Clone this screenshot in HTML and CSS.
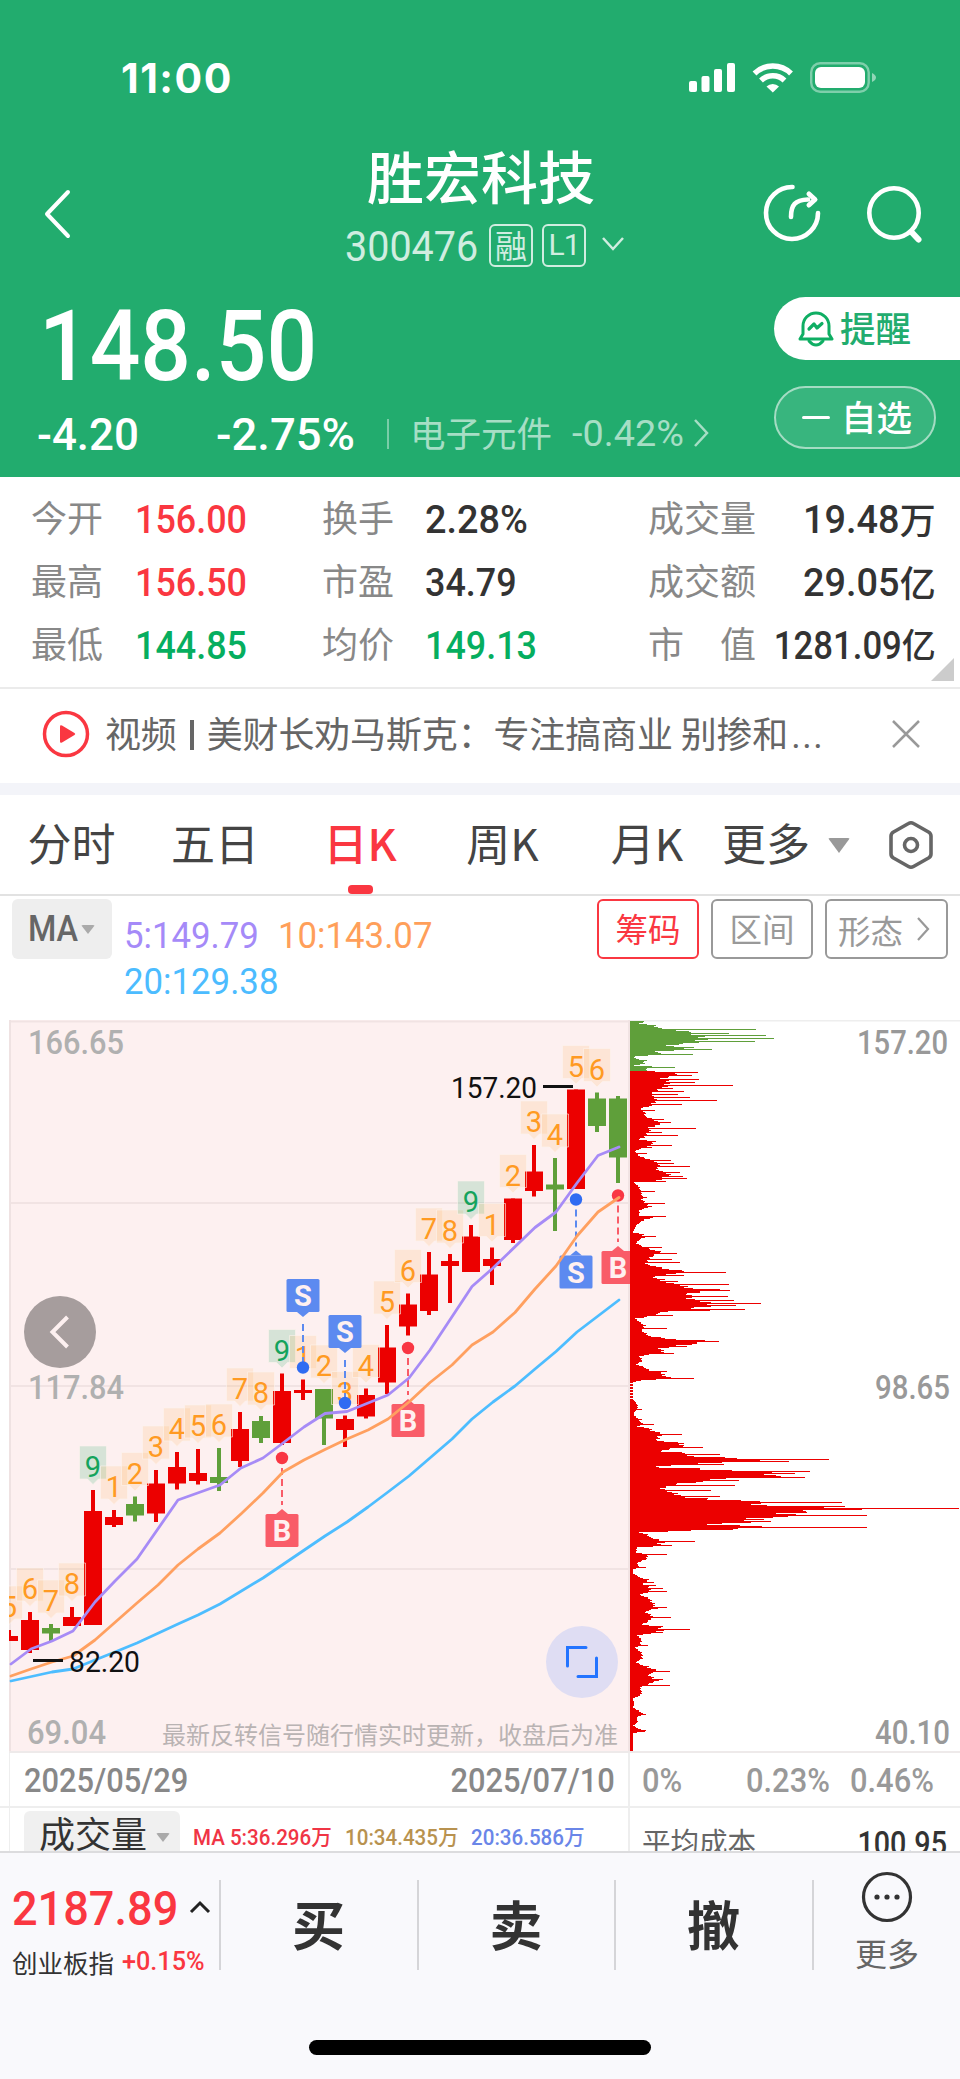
FILE: index.html
```html
<!DOCTYPE html>
<html lang="zh-CN">
<head>
<meta charset="utf-8">
<title>胜宏科技 300476</title>
<link rel="stylesheet" href="styles.css">
</head>
<body>
<div class="app">
  <header class="head">
    <div class="status">
      <span class="clock">11:00</span>
      <svg class="status-icons" width="190" height="34" viewBox="0 0 190 34" fill="#fff">
        <rect x="0" y="20" width="8" height="11" rx="2"/><rect x="12.500" y="15" width="8" height="16" rx="2"/><rect x="25" y="8" width="8" height="23" rx="2"/><rect x="38" y="2" width="8" height="29" rx="2"/>
        <g fill="none" stroke="#fff" stroke-width="5.500"><path d="M65.500 12.500a26 26 0 0 1 36.500 0"/><path d="M72 19.500a17 17 0 0 1 23.500 0"/></g>
        <path d="M77.500 25.500a9 9 0 0 1 12.500 0l-6.200 6z"/>
        <rect x="122.200" y="2.200" width="57.500" height="28.500" rx="9" fill="none" stroke="#fff" stroke-opacity=".42" stroke-width="2.400"/>
        <rect x="126" y="6" width="50" height="21" rx="6"/><path d="M183 12q4 2 4 4.500t-4 4.500z" opacity=".5"/>
      </svg>
    </div>
    <div class="nav">
      <svg class="back" width="30" height="52" viewBox="0 0 30 52"><path d="M26 4L5 26l21 22" fill="none" stroke="#fff" stroke-width="4" stroke-linecap="round" stroke-linejoin="round"/></svg>
      <div class="title">
        <h1>胜宏科技</h1>
        <div class="code"><span class="din code-num">300476</span><span class="badge">融</span><span class="badge latin">L1</span>
          <svg width="24" height="16" viewBox="0 0 24 16"><path d="M2 2l10 11L22 2" fill="none" stroke="#d0ede0" stroke-width="2.500"/></svg></div>
      </div>
      <svg class="nav-icons" width="164" height="64" viewBox="0 0 164 64" fill="none" stroke="#fff" stroke-width="4.600" stroke-linecap="round" stroke-linejoin="round">
        <path d="M32.500 6A26 26 0 1 0 58 32"/><path d="M31 36c0-12 4-17 17-17.500"/><path d="M49 13l6 5.500-6 5.500" stroke-width="5"/>
        <circle cx="134" cy="32" r="24.700"/><path d="M151.500 51l7 7.500" stroke-width="6"/>
      </svg>
    </div>
    <div class="quote">
      <div class="quote-main">
        <div class="price"><span class="din">148.50</span></div>
        <div class="change">
          <span class="din chg">-4.20</span><span class="din pct">-2.75%</span><i class="sep"></i>
          <span class="sector">电子元件</span><span class="din sector-pct">-0.42%</span>
          <svg width="16" height="28" viewBox="0 0 16 28"><path d="M2 1l12 13L2 27" fill="none" stroke="#a6dec5" stroke-width="2.500"/></svg>
        </div>
      </div>
      <div class="pills">
        <div class="pill remind">
          <svg width="36" height="38" viewBox="0 0 36 38" fill="none" stroke="#0fae63" stroke-width="3" stroke-linejoin="round" stroke-linecap="round"><path d="M5 24V16a13 13 0 0 1 26 0v8l3 5H2z"/><path d="M11 19l5-5 3 4 5-4.500" stroke-width="3.200"/><path d="M11 31q7 8 14 0"/></svg><span>提醒</span>
        </div>
        <div class="pill watch"><i></i><span>自选</span></div>
      </div>
    </div>
  </header>

  <section class="stats">
    <span class="k">今开</span><span class="v up"><b class="din">156.00</b></span><span class="k">换手</span><span class="v"><b class="din broad">2.28%</b></span><span class="k">成交量</span><span class="v end"><b class="din broad">19.48</b>万</span>
    <span class="k">最高</span><span class="v up"><b class="din">156.50</b></span><span class="k">市盈</span><span class="v"><b class="din">34.79</b></span><span class="k">成交额</span><span class="v end"><b class="din broad">29.05</b>亿</span>
    <span class="k">最低</span><span class="v down"><b class="din">144.85</b></span><span class="k">均价</span><span class="v down"><b class="din">149.13</b></span><span class="k wide"><span>市</span><span>值</span></span><span class="v end small"><b class="din">1281.09</b>亿</span>
    <i class="corner"></i>
  </section>

  <section class="news">
    <svg width="48" height="48" viewBox="0 0 48 48"><circle cx="24" cy="24" r="21.500" fill="none" stroke="#fa3741" stroke-width="3.500"/><path d="M18 16.500q0-2 2-1l12.500 7.500q1.500 1 0 2L20 32.500q-2 1-2-1z" fill="#fa3741"/></svg>
    <p>视频<i class="bar"></i>美财长劝马斯克：专注搞商业 别掺和<span class="dots">...</span></p>
    <svg class="close" width="28" height="28" viewBox="0 0 28 28"><path d="M1 1l26 26M27 1L1 27" stroke="#999" stroke-width="2.500"/></svg>
  </section>

  <nav class="tabs">
    <span>分时</span><span>五日</span><span class="on">日K</span><span>周K</span><span>月K</span><span class="more">更多<i class="tri"></i></span>
    <svg width="48" height="50" viewBox="0 0 48 50" fill="none" stroke="#666" stroke-width="3.600" stroke-linejoin="round"><path d="M21.500 3.500q2.500-1.500 5 0l15 8.500q2.500 1.500 2.500 4v18q0 2.500-2.500 4l-15 8.500q-2.500 1.500-5 0l-15-8.500Q4 36.500 4 34V16q0-2.500 2.500-4z"/><circle cx="24" cy="25" r="6.500"/></svg>
  </nav>

  <section class="indicator">
    <div class="ma-btn"><span class="din">MA</span><i class="tri"></i></div>
    <div class="ma-values"><span class="din c5">5:149.79</span><span class="din c10">10:143.07</span><span class="din c20">20:129.38</span></div>
    <div class="btns"><span class="btn on">筹码</span><span class="btn">区间</span><span class="btn arrow">形态<svg width="14" height="26" viewBox="0 0 14 26"><path d="M2 2l10 11L2 24" fill="none" stroke="#999" stroke-width="2.200"/></svg></span></div>
  </section>

  <svg class="chart" id="chart" width="960" height="733" viewBox="0 1020 960 733"></svg>

  <section class="axis">
    <div class="dates"><span class="din">2025/05/29</span><span class="din r">2025/07/10</span></div>
    <div class="shares"><span class="din">0%</span><span class="din">0.23%</span><span class="din">0.46%</span></div>
  </section>
  <section class="volume">
    <div class="vol-left"><div class="vol-btn">成交量<i class="tri"></i></div><span class="vm red"><b class="din">MA 5:36.296万</b></span><span class="vm gold"><b class="din">10:34.435万</b></span><span class="vm blue"><b class="din">20:36.586万</b></span></div>
    <div class="cost"><span>平均成本</span><b class="din">100.95</b></div>
  </section>

  <footer class="bottom">
    <div class="trade">
      <div class="index">
        <div class="index-top"><span class="din">2187.89</span><svg width="22" height="14" viewBox="0 0 22 14"><path d="M2 12l9-9 9 9" fill="none" stroke="#222" stroke-width="3"/></svg></div>
        <div class="index-sub"><span>创业板指</span><span class="din">+0.15%</span></div>
      </div>
      <button>买</button><button>卖</button><button>撤</button>
      <div class="more-btn"><svg width="52" height="52" viewBox="0 0 52 52"><circle cx="26" cy="26" r="23.500" fill="none" stroke="#333" stroke-width="3.200"/><circle cx="16" cy="26" r="2.600" fill="#333"/><circle cx="26" cy="26" r="2.600" fill="#333"/><circle cx="36" cy="26" r="2.600" fill="#333"/></svg><span>更多</span></div>
    </div>
    <i class="home"></i>
  </footer>
</div>
<script src="chart.js"></script>
</body>
</html>
```
FILE: styles.css
```css
* { box-sizing: border-box; }
body { margin: 0; background: #fff; font-family: "Noto Sans CJK SC", sans-serif; color: #333; }
i, b { font-style: normal; font-weight: inherit; }
h1, p { margin: 0; }
.app { width: 960px; height: 2079px; display: flex; flex-direction: column; overflow: hidden; white-space: nowrap; }
.din { display: inline-block; font-family: Roboto, "Noto Sans CJK SC", sans-serif; transform: scaleX(.92); transform-origin: left center; }
.tri { display: block; width: 0; height: 0; border: solid transparent; border-width: 9px 7px 0; border-top-color: #aaa; border-radius: 2px; }

/* header */
.head { height: 477px; background: #22ac6e; color: #fff; flex: none; }
.status { height: 108px; padding: 48px 81px 0 121px; display: flex; justify-content: space-between; align-items: center; }
.clock { font: 700 41px/60px Inter, sans-serif; letter-spacing: 1.5px; }
.nav { height: 178px; padding: 0 36px 0 42px; display: grid; grid-template-columns: 164px 1fr 164px; align-items: center; }
.title { display: flex; flex-direction: column; align-items: center; padding-top: 6px; margin-left: -4px; }
.back { margin-top: 34px; }
.nav-icons { margin-top: 32px; }
h1 { font-size: 57px; line-height: 80px; font-weight: 500; }
.code { display: flex; align-items: center; height: 42px; margin: 11px -8px 0 0; gap: 9px; }
.code-num { font-size: 42px; line-height: 42px; width: 135px; color: #d0ede0; margin-top: 3px; transform: scaleX(.94); }
.badge { width: 44px; height: 43px; border: 2px solid #d0ede0; border-radius: 6px; font-size: 32px; line-height: 36px; text-align: center; color: #d0ede0; }
.badge.latin { font-family: Roboto, sans-serif; font-size: 30px; line-height: 38px; letter-spacing: -1px; }
.code svg { margin: -3px 0 0 6px; }
.quote { display: flex; justify-content: space-between; height: 191px; }
.price { font-size: 98px; line-height: 98px; font-weight: 500; padding: 2px 0 0 39px; height: 117px; }
.price .din { transform: scaleX(.91); }
.change { display: flex; align-items: center; height: 62px; padding-left: 37px; }
.chg, .pct { font-size: 45px; font-weight: 500; transform: scaleX(.975); }
.chg { width: 179px; } .pct { width: 171px; transform: scaleX(1.01); }
.sep { width: 2px; height: 30px; background: #7acda8; margin-right: 21px; }
.sector { font-size: 35.500px; color: #a6dec5; width: 162px; margin-top: -5px; }
.sector-pct { font-size: 36px; color: #a6dec5; width: 121px; transform: scaleX(1.05); margin-top: -1px; }
.change svg { margin-top: -3px; }
.pills { width: 186px; padding-top: 11px; display: flex; flex-direction: column; gap: 26px; }
.pill { height: 63px; display: flex; align-items: center; font-size: 35.500px; font-weight: 500; line-height: 50px; }
.pill span { margin-top: -4px; }
.remind { background: #fff; border-radius: 32px 0 0 32px; color: #22ac6e; padding-left: 24px; gap: 6px; }
.watch { width: 162px; border: 2px solid #a4dcc3; background: #38b57e; border-radius: 32px; padding-left: 26px; gap: 11px; }
.watch i { width: 28px; height: 3px; background: #fff; border-radius: 2px; }

/* stats */
.stats { position: relative; height: 212px; flex: none; border-bottom: 2px solid #ebebeb; padding: 9px 26px 10px 31px; display: grid; grid-template-columns: 104px 187px 103px 223px 110px 1fr; grid-template-rows: repeat(3, 63px); align-items: center; font-size: 36px; line-height: 50px; }
.k { color: #888; margin-top: -4px; }
.wide { width: 108px; display: flex; justify-content: space-between; }
.v { font-weight: 500; display: flex; align-items: center; }
.v .din { font-size: 39px; margin-top: 4px; }
.v .broad { transform: scaleX(.97); }
.end { justify-content: flex-end; }
.end .din { transform-origin: right center; }
.small { font-size: 34px; } .small .din { transform: scaleX(.89); }
.up { color: #fa3741; } .down { color: #06ae5f; }
.corner { position: absolute; right: 6px; bottom: 6px; border: solid transparent; border-width: 0 0 23px 23px; border-bottom-color: #ccc; }

/* news */
.news { height: 106px; flex: none; border-bottom: 12px solid #f3f4f9; padding: 0 40px 4px 42px; display: flex; align-items: center; font-size: 36px; color: #666; }
.news p { margin: -5px 0 0 15px; flex: 1; letter-spacing: -.15px; }
.bar { display: inline-block; width: 4px; height: 30px; background: #666; margin: 0 13px 0 13px; vertical-align: -2px; }
.dots { font-family: Roboto, sans-serif; margin-left: 3px; letter-spacing: 1.5px; }

/* tabs */
.tabs { height: 101px; flex: none; border-bottom: 2px solid #e2e2e2; padding: 0 25px 0 0; display: grid; grid-template-columns: 143px 144px 146px 139px 150px 1fr 48px; justify-items: center; align-items: center; font-size: 44px; line-height: 64px; color: #444; }
.tabs > span { margin-top: -5px; }
.tabs .more { justify-self: start; display: flex; align-items: center; gap: 18px; }
.tabs .tri { border-width: 15px 11px 0; border-top-color: #999; margin-top: 7px; }
.tabs .on { position: relative; color: #fa3741; font-weight: 500; }
.tabs .on::after { content: ""; position: absolute; left: 50%; bottom: -20px; width: 25px; height: 9px; margin-left: -12px; border-radius: 4px; background: #fa3741; }

/* moving averages */
.indicator { height: 124px; flex: none; padding: 3px 12px; display: flex; }
.ma-btn { width: 100px; height: 60px; border-radius: 6px; background: #eee; display: flex; align-items: center; padding-left: 16px; font-size: 36px; color: #666; font-weight: 500; }
.ma-btn .din { width: 53px; transform: scaleX(.9); }
.ma-values { width: 340px; margin-left: 12px; padding-top: 14px; display: grid; grid-template-columns: 154px 1fr; line-height: 46px; font-size: 36.500px; align-content: start; }
.ma-values .din { transform: scaleX(.953); }
.c5 { color: #a58af8; } .c10 { color: #ff9f5a; } .c20 { color: #4cbcff; grid-column: span 2; }
.btns { margin-left: auto; display: flex; gap: 12px; }
.btn { width: 102px; height: 60px; border: 2px solid #999; border-radius: 6px; color: #999; font-size: 32.500px; line-height: 53px; text-align: center; }
.btn.on { color: #fa3741; border-color: #fa3741; }
.btn.arrow { width: 123px; display: flex; align-items: center; padding-left: 11px; gap: 13px; }
.chart { display: block; flex: none; }

/* dates */
.axis { height: 55px; flex: none; display: flex; font-size: 33px; border-bottom: 2px solid #eee; padding-left: 9px; }
.axis > div { display: flex; align-items: center; padding-top: 1px; }
.axis .dates { width: 621px; border: solid #eee; border-width: 0 2px 0 1px; justify-content: space-between; padding: 1px 13px 0 14px; color: #888; }
.dates .din { transform: scaleX(.935); font-weight: 500; }
.dates .r { transform-origin: right center; }
.axis .shares { color: #999; padding-left: 12px; display: grid; grid-template-columns: 104px 104px 100px; font-weight: 500; }
.shares .din { transform: scaleX(.935); }
.volume { height: 43px; flex: none; display: flex; overflow: hidden; padding-left: 9px; }
.vol-left { width: 621px; border: solid #eee; border-width: 0 2px 0 1px; padding: 3px 0 0 14px; display: flex; }
.vol-btn { width: 156px; height: 60px; border-radius: 6px; background: #f0f0f0; font-size: 36px; line-height: 42px; padding-left: 15px; display: flex; gap: 9px; margin-right: 13px; }
.vol-btn .tri { margin-top: 22px; }
.vm { font-size: 22px; line-height: 49px; font-weight: 500; }
.vm .din { transform: scaleX(.935); }
.vm.red { width: 152px; color: #f03545; } .vm.gold { width: 126px; color: #b8924f; } .vm.blue { color: #6a86e8; }
.cost { width: 330px; padding: 8px 13px 0 12px; display: flex; justify-content: space-between; font-size: 28.500px; line-height: 50px; color: #666; }
.cost .din { font-size: 33px; font-weight: 500; color: #333; transform: scaleX(.87); transform-origin: right center; line-height: 56px; }

/* bottom bar */
.bottom { height: 228px; flex: none; background: #f9f9fc; border-top: 2px solid #dcdcde; }
.trade { display: grid; grid-template-columns: 219px 198px 197px 198px 148px; height: 187px; padding-top: 27px; }
.trade > * { height: 90px; border: 0; background: none; padding: 0; margin: 0; }
.trade button { border-left: 2px solid #d5d5d8; padding: 0 1px 5px 0; font: 700 53px/80px "Noto Sans CJK SC", sans-serif; color: #333; }
.trade .index { padding-left: 12px; }
.index-top { display: flex; align-items: center; height: 57px; color: #fa3741; font-size: 49px; font-weight: 500; }
.index-top .din { width: 177px; }
.index-top svg { margin-top: -4px; }
.index-sub { display: flex; align-items: center; height: 48px; font-size: 25.500px; }
.index-sub .din { color: #fa3741; font-size: 26px; font-weight: 500; margin-left: 8px; transform: scaleX(.97); }
.trade .more-btn { border-left: 2px solid #d5d5d8; display: flex; flex-direction: column; align-items: center; }
.more-btn svg { margin-top: -9px; flex: none; }
.more-btn span { font-size: 32px; line-height: 46px; margin-top: 6px; color: #666; }
.home { display: block; width: 342px; height: 15px; border-radius: 8px; background: #000; margin: 0 auto; }
```
FILE: chart.js
```js
const svg = document.getElementById('chart');
const RED = '#ec0000', GREEN = '#5f9f3a';
let out = '';
const rect = (x, y, w, h, fill, extra = '') => { out += `<rect x="${x}" y="${y}" width="${w}" height="${h}" fill="${fill}" ${extra}/>`; };
const text = (s, x, y, size, fill, len, anchor = 'start', weight = 400) => {
  const fit = len ? `textLength="${len}" lengthAdjust="spacingAndGlyphs"` : '';
  out += `<text x="${x}" y="${y}" font-size="${size}" fill="${fill}" text-anchor="${anchor}" font-weight="${weight}" font-family="Roboto, 'Noto Sans CJK SC', sans-serif" ${fit}>${s}</text>`;
};

/* plot area and grid */
rect(9, 1020, 621, 733, '#fdf0f0');
[1021, 1202.5, 1385.500, 1568.500].forEach(y => rect(9, y - 0.5, 621, 2, '#f1e3e3'));
rect(9, 1020, 2, 733, '#efe2e2');
rect(628, 1020, 2, 733, '#f1e3e3');
rect(630, 1020, 330, 1.5, '#eee');
rect(9, 1751, 951, 2, '#eeeaea');

text('166.65', 28, 1054, 32.5, '#b0b0b0', 96, 'start', 500);
text('117.84', 28, 1399, 32.5, '#b0b0b0', 96, 'start', 500);
text('69.04', 27, 1744, 32.5, '#b0b0b0', 79, 'start', 500);
text('最新反转信号随行情实时更新，收盘后为准', 162, 1744, 24, '#b9b3b3', 456);

/* candles: high, body top, body bottom, low, rising, countdown tag */
const candles = [
  [1630, 1636, 1641, 1641, 1, 5], [1612, 1620, 1650, 1653, 1, 6], [1624, 1628, 1633.5, 1641, 0, 7], [1607, 1617, 1626, 1626, 1, 8],
  [1490, 1511, 1625, 1625, 1, 9], [1510, 1517, 1525, 1527, 1, 1], [1496.5, 1504, 1515.5, 1521.5, 0, 2], [1470, 1483.5, 1513.5, 1522, 1, 3],
  [1452, 1467, 1483.5, 1489.5, 1, 4], [1449, 1473, 1481, 1484.5, 1, 5], [1448, 1477, 1483, 1491, 0, 6], [1412, 1429, 1461, 1467, 1, 7],
  [1416, 1421, 1438, 1443, 0, 8], [1373.5, 1391, 1443, 1445, 1, 9], [1379.5, 1390, 1393, 1400, 1, 1], [1389, 1389, 1418.5, 1445, 0, 2],
  [1415.500, 1419, 1430, 1447, 1, 3], [1388.500, 1395, 1416.5, 1418.5, 1, 4], [1325, 1347.5, 1382.5, 1394, 1, 5], [1293.5, 1304.5, 1326.5, 1335.5, 1, 6],
  [1252, 1274.500, 1311, 1315, 1, 7], [1254, 1261, 1266, 1303, 1, 8], [1225, 1236.500, 1272, 1272, 1, 9], [1247.5, 1259, 1266, 1285, 1, 1],
  [1198.500, 1198.500, 1240, 1243, 1, 2], [1145, 1171.5, 1191, 1196.5, 1, 3], [1158, 1184.5, 1189.5, 1231, 0, 4], [1089.500, 1089.500, 1189, 1189, 1, 5],
  [1092.500, 1098.500, 1126, 1132, 0, 6], [1096, 1098.500, 1157.500, 1183, 0, 0]
];
out += '<defs><clipPath id="plot"><rect x="9" y="1020" width="621" height="733"/></clipPath></defs><g clip-path="url(#plot)">';
candles.forEach((c, i) => {
  const x = 9 + 21 * i, col = c[4] ? RED : GREEN;
  rect(x - 2, c[0], 4, c[3] - c[0], col);
  rect(x - 9, c[1], 18, c[2] - c[1], col);
});
candles.forEach((c, i) => {
  if (!c[5]) return;
  const x = 9 + 21 * i, y = c[0] - 44, nine = c[5] === 9;
  out += `<path d="M${x - 13.5} ${y}h27v33h-8l-5.500 5.500-5.500-5.500h-8z" fill="${nine ? '#0f9f5a' : '#ff9a22'}" fill-opacity="${nine ? .16 : .12}" stroke="#fdf3ee" stroke-opacity=".6" stroke-width="1"/>`;
  text(c[5], x, y + 31, 29, nine ? '#15a35c' : '#ff9a22', 0, 'middle');
});

/* trade markers: x, dot y, box top */
[[303, 1367.5, 1279, 'S'], [345, 1403, 1315, 'S'], [576, 1199.5, 1255.5, 'S'], [282, 1458, 1514, 'B'], [408, 1348, 1404, 'B'], [618, 1195.500, 1251, 'B']].forEach(([x, dot, top, type]) => {
  const sell = type === 'S', col = sell ? '#5c8af0' : '#f95c68', above = top < dot;
  const from = above ? top + 45 : dot + 10, to = above ? dot - 4 : top - 9;
  out += `<path d="M${x} ${from}V${to}" stroke="${col}" stroke-width="2" stroke-dasharray="7 4"/>`;
  out += `<circle cx="${x}" cy="${dot}" r="6.200" fill="${sell ? '#2f6bf2' : '#f93643'}"/>`;
  rect(x - 16.500, top, 33, 33, col, 'rx="1.5"');
  out += above ? `<path d="M${x - 6} ${top + 33}h12l-6 5z" fill="${col}"/>` : `<path d="M${x - 6} ${top}h12l-6-5z" fill="${col}"/>`;
  text(type, x, top + 27, 29, '#fff0f0', 0, 'middle', 700);
});

/* moving average lines */
const line = (pts, col) => { out += `<polyline points="${pts}" fill="none" stroke="${col}" stroke-width="2.800" stroke-linejoin="round" stroke-linecap="round"/>`; };
line('11,1664 31,1649 52,1641 73,1631 95,1602 115,1581 137,1559 178,1500 220,1485 241,1468 263,1458 283,1443 304,1427 325,1413.500 347,1411.500 388,1395 409,1378 430,1350 472,1286.500 493,1268 535,1227.500 556,1212 577,1183 598,1155.500 619,1147', '#a78bf6');
line('11,1676 31,1669 52,1662 73,1656 95,1640 137,1603 158,1585 178,1565 198,1549 220,1533 242,1513 263,1493 283,1472 304,1460 325,1449.500 347,1439 368,1430 388,1419 409,1402 430,1382.500 452,1365 472,1345 493,1332 515,1312.500 535,1289 556,1266 577,1236 598,1212 619,1197.500', '#ffa060');
line('11,1681 52,1672 73,1669 95,1660 115,1652 137,1643 178,1624 198,1615 220,1604 263,1578 325,1536 347,1522 368,1507 388,1492 409,1476 452,1439 472,1419 493,1402 515,1386 535,1369 556,1351.500 577,1332 598,1316 619,1300', '#4dbdff');
out += '</g>';

rect(543, 1085, 30, 3, '#111');
text('157.20', 451, 1098, 30, '#111', 86);
rect(33, 1659, 30, 3, '#111');
text('82.20', 69, 1671.5, 30, '#111', 71);

/* overlay controls */
out += '<circle cx="60" cy="1332" r="36" fill="#a69d9d"/><path d="M67.500 1317l-15 15 15 15" fill="none" stroke="#fdf0f0" stroke-width="4"/>';
out += '<circle cx="582" cy="1662" r="36" fill="#dfddf3"/><path d="M586 1647.500h-18.500v18.500M578 1676.500h18.500v-18.500" fill="none" stroke="#2374ff" stroke-width="3" stroke-linecap="round"/>';

/* chip distribution: body outline as y, length pairs, then single long bars */
const body = [
  1021,15, 1023,10, 1025,25, 1028,30, 1030,46, 1032,65, 1035,70, 1038,77, 1042,64, 1044,48, 1045.5,37, 1047,62, 1049,57, 1051,27, 1054,30, 1056,5, 1057.5,4, 1060,13, 1063,15, 1065,4, 1066,22, 1069,15, 1070.5,20,
  1073,48, 1075,45, 1078,34, 1081,40, 1087,34, 1091,27, 1093,22, 1100,27, 1106,20, 1107.5,10, 1112,16, 1116,15, 1118,22, 1123,31, 1126,25, 1127,17, 1131,20, 1137,15, 1138.5,7, 1141,23, 1144,23, 1147,13, 1151,5, 1156,10, 1160,24, 1164,30, 1168,27, 1172,33, 1175,41, 1178,33, 1181,26, 1182,4,
  1187,10, 1195,12, 1200,13, 1206,19, 1210,10, 1215,9, 1217,23, 1219,15, 1225,6, 1232,3, 1233.5,13, 1237,14, 1240,8, 1243,7, 1247,15, 1252,32, 1256,22, 1262,17, 1263.5,15, 1266,27, 1269,40, 1271,58, 1273,43, 1275,33, 1277,24, 1281,33, 1284,50, 1287,60, 1290,76, 1294,56, 1298,63, 1302,82, 1305,84, 1308,60, 1310,83, 1311,37, 1317,13, 1318,5,
  1325,15, 1330,12, 1336,20, 1339,43, 1341,80, 1343,70, 1345,50, 1348,30, 1352,33, 1354,20, 1355.5,10, 1360,12, 1364,7, 1367,15, 1370,20, 1373,33, 1376,37, 1378,43, 1380,10, 1382,3, 1399,3, 1403,7, 1408,8, 1412,4, 1415,4, 1419,9, 1421,10, 1424,15, 1426,7, 1428,20, 1430,22, 1433,33, 1437,28, 1440,27,
  1442,50, 1445,55, 1448,40, 1451,30, 1453,57, 1456,65, 1458,115, 1460.5,123, 1462,90, 1464,63, 1465.5,28, 1467.5,30, 1469.5,90, 1472,150, 1475,151, 1477,140, 1478.5,77, 1481,73, 1483,50, 1486,37, 1488,33, 1491,40, 1494,47, 1497,57, 1500,113, 1502.5,140, 1504,113, 1506,177, 1508,257, 1510,190, 1513,157, 1515.500,180, 1517,140, 1520,110, 1522,123, 1523.5,70, 1525.500,123, 1527,123, 1529,90, 1531,37,
  1532,10, 1534,17, 1537,20, 1541,37, 1543,30, 1545.5,33, 1547,7, 1552,6, 1554,17, 1558,17, 1560,13, 1563,7, 1567,10, 1569,3, 1573,3, 1577,10, 1580,17, 1583,13, 1587,20, 1591,20, 1594,10, 1598,20, 1603,23, 1608,27, 1611,15, 1616,23, 1620,20, 1624,12, 1627,30, 1630,33, 1633,20, 1635,7, 1639,12, 1645,10, 1647,5, 1652,12, 1658,12, 1662,6, 1666,15, 1671,30, 1674,18, 1680,27, 1685,17, 1687,10, 1692,12, 1695,10,
  1698,3, 1703,4, 1707,3, 1711,10, 1714,13, 1717,7, 1722,8, 1725,3, 1728,8, 1731,15, 1732.5,3, 1751,3];
const spikes = [1029,126, 1033,99, 1035,136, 1038,144, 1041,125, 1049,82, 1054,63, 1060,17, 1067,45, 1072,68, 1075,62, 1079,69, 1082,65, 1085,103, 1088,43, 1091,54, 1094,48, 1097,60, 1100,87, 1104,52, 1110,25, 1119,34, 1122,41, 1128,66, 1132,32, 1135,48, 1141,26, 1145,42, 1147,22, 1153,17, 1160,41, 1163,44, 1166,60, 1172,50, 1176,53, 1178,57, 1181,36, 1191,25, 1197,17, 1203,35, 1206,22, 1216,36, 1236,26, 1247,32, 1253,47, 1259,42, 1262,50, 1272,96, 1275,54, 1279,35, 1281,48, 1284,99, 1289,90, 1290,100, 1296,98, 1300,104, 1303,131, 1305,106, 1309,115, 1315,43, 1328,37, 1337,31, 1340,75, 1341,89, 1346,57, 1353,44, 1371,37, 1378,64,
  1409,12, 1419,12, 1424,24, 1429,22, 1434,52, 1441,34, 1447,73, 1452,52, 1454,90, 1459,199, 1461,159, 1464,94, 1468,70, 1471,180, 1473,165, 1477,175, 1480,109, 1485,105, 1490,81, 1496,90, 1499,77, 1502,212, 1506,215, 1508,329, 1515,237, 1519,134, 1521,141, 1527,237, 1529,103, 1541,65, 1545,42, 1554,37, 1567,16, 1579,19, 1582,24, 1585,26, 1588,33, 1591,37, 1607,37, 1617,41, 1626,33, 1629,60, 1632,33, 1645,18, 1666,19, 1671,40, 1679,33, 1685,40, 1714,16, 1730,16];
const longBars = {};
for (let i = 0; i < spikes.length; i += 2) longBars[spikes[i]] = spikes[i + 1];
let paths = { [GREEN]: '', [RED]: '' }, seg = 0;
for (let y = 1021; y < 1751; y++) {
  if (y > 1381 && y < 1399 && y % 3 === 0) continue;
  while (seg + 2 < body.length - 2 && body[seg + 2] <= y) seg += 2;
  const t = Math.min(1, Math.max(0, (y - body[seg]) / (body[seg + 2] - body[seg])));
  const base = body[seg + 1] + t * (body[seg + 3] - body[seg + 1]);
  const notch = base > 5 ? ((y * 37) % 11 - 6) * base * 0.018 : 0;
  const len = longBars[y] || Math.max(3, Math.round(base + notch));
  paths[y < 1071 ? GREEN : RED] += `M630 ${y}h${len}v1h-${len}z`;
}
out += `<path d="${paths[GREEN]}" fill="${GREEN}"/><path d="${paths[RED]}" fill="${RED}"/>`;
text('157.20', 948, 1054, 32.5, '#999', 91, 'end', 500);
text('98.65', 950, 1399, 32.5, '#999', 75, 'end', 500);
text('40.10', 950, 1744, 32.5, '#999', 75, 'end', 500);
svg.innerHTML = out;
```
